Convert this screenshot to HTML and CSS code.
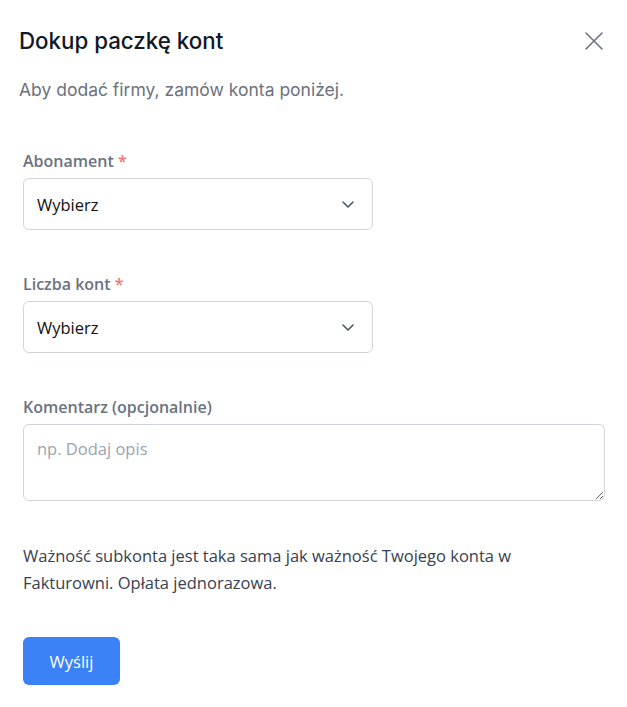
FILE: index.html
```html
<!DOCTYPE html>
<html lang="pl">
<head>
    <meta charset="UTF-8">
    <meta name="viewport" content="width=device-width, initial-scale=1.0">
    <title>Dokup paczkę kont</title>
    <link rel="stylesheet" href="styles.css">
</head>
<body>
    <div class="modal">
        <div class="modal-header">
            <h2 class="modal-title">Dokup paczkę kont</h2>
            <button class="close-btn" aria-label="Zamknij">
                <svg width="20" height="20" viewBox="0 0 20 20" fill="none" stroke="currentColor" stroke-width="1.6" stroke-linecap="round">
                    <path d="M2 2 L18 18 M18 2 L2 18"/>
                </svg>
            </button>
        </div>
        <p class="modal-subtitle">Aby dodać firmy, zamów konta poniżej.</p>

        <form class="modal-form">
            <div class="field">
                <label class="field-label">Abonament <span class="required">*</span></label>
                <div class="select">
                    <span>Wybierz</span>
                    <svg width="14" height="14" viewBox="0 0 14 14" fill="none" stroke="currentColor" stroke-width="1.6" stroke-linecap="round" stroke-linejoin="round">
                        <path d="M2 5 L7 10 L12 5"/>
                    </svg>
                </div>
            </div>

            <div class="field">
                <label class="field-label">Liczba kont <span class="required">*</span></label>
                <div class="select">
                    <span>Wybierz</span>
                    <svg width="14" height="14" viewBox="0 0 14 14" fill="none" stroke="currentColor" stroke-width="1.6" stroke-linecap="round" stroke-linejoin="round">
                        <path d="M2 5 L7 10 L12 5"/>
                    </svg>
                </div>
            </div>

            <div class="field">
                <label class="field-label">Komentarz (opcjonalnie)</label>
                <textarea class="textarea" placeholder="np. Dodaj opis"></textarea>
            </div>

            <p class="info">Ważność subkonta jest taka sama jak ważność Twojego konta w Fakturowni. Opłata jednorazowa.</p>

            <button type="button" class="submit-btn">Wyślij</button>
        </form>
    </div>
</body>
</html>
```

FILE: styles.css
```css
body {
    margin: 0;
    background-color: #fff;
    font-family: "Open Sans", "Noto Sans", Arial, sans-serif;
    color: #1f2937;
}

.modal {
    padding: 24px 19px 20px 19px;
}

.modal-header {
    display: flex;
    justify-content: space-between;
    align-items: center;
}

.modal-title {
    margin: 0;
    font-family: Inter, "Noto Sans", sans-serif;
    font-size: 22.3px;
    font-weight: 500;
    color: #111827;
    line-height: 34px;
}

.close-btn {
    background: none;
    border: none;
    padding: 0;
    margin-right: 4px;
    color: #6b7280;
    cursor: pointer;
    display: flex;
}

.modal-subtitle {
    margin: 20px 0 0 0;
    font-family: Inter, "Noto Sans", sans-serif;
    font-size: 17.5px;
    color: #6b7280;
    line-height: 24px;
}

.modal-form {
    padding: 0 3px 0 4px;
    margin-top: 48px;
}

.field {
    margin-bottom: 43px;
}

.field-label {
    display: block;
    font-size: 16px;
    font-weight: 600;
    color: #6b7280;
    margin-bottom: 6px;
    line-height: 22px;
}

.required {
    color: #f87171;
}

.select {
    width: 350px;
    height: 52px;
    box-sizing: border-box;
    border: 1px solid #d1d5db;
    border-radius: 6px;
    display: flex;
    align-items: center;
    justify-content: space-between;
    padding: 0 17px 0 13px;
    font-size: 16.5px;
    color: #111;
}

.select svg {
    color: #4b5563;
}

.textarea {
    display: block;
    width: 100%;
    height: 77px;
    box-sizing: border-box;
    border: 1px solid #d1d5db;
    border-radius: 6px;
    padding: 12px 13px;
    font-family: inherit;
    font-size: 16.5px;
    resize: vertical;
}

.textarea::placeholder {
    color: #9ca3af;
}

.info {
    max-width: 500px;
    margin: -2px 0 0 0;
    font-size: 16.5px;
    line-height: 27px;
    color: #374151;
}

.submit-btn {
    margin-top: 41px;
    width: 97px;
    height: 48px;
    border: none;
    border-radius: 6px;
    background-color: #3b82f6;
    color: #fff;
    font-family: inherit;
    font-size: 16.5px;
    cursor: pointer;
}
```
